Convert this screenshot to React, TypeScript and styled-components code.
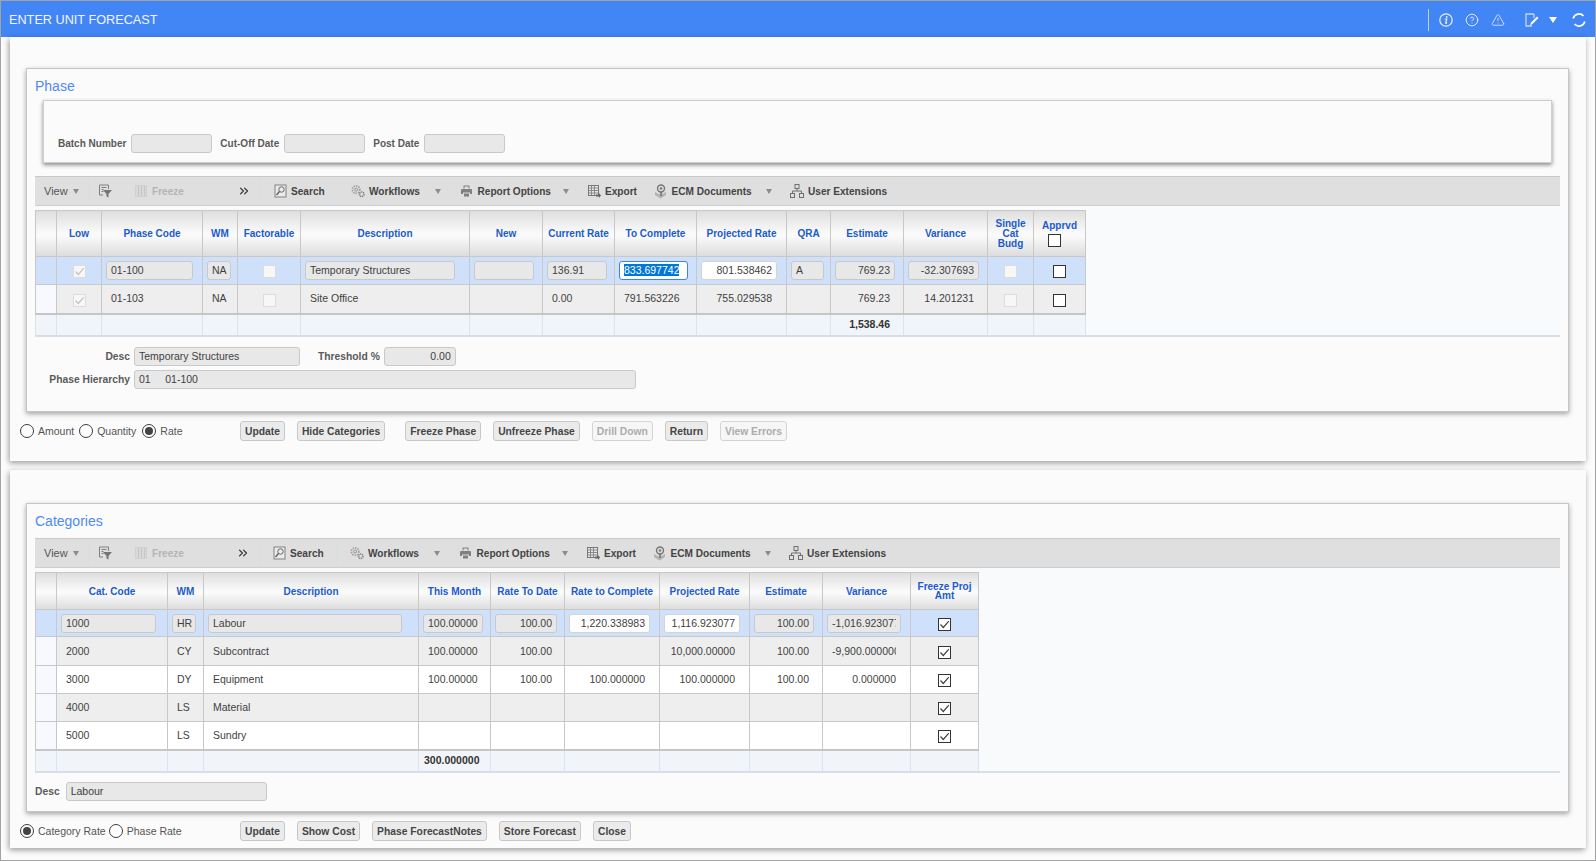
import styled, { createGlobalStyle } from 'styled-components';
import { ChevronsRight, CircleHelp, TriangleAlert } from 'lucide-react';

const GlobalStyle = createGlobalStyle`
  html, body { margin: 0; padding: 0; background: #fbfbfb; }
  body { font-family: "Liberation Sans", Arial, sans-serif; }
  * { box-sizing: border-box; }
`;

const AppWindow = styled.div`
  width: 1596px;
  height: 861px;
  overflow: hidden;
  border: 1px solid #a3a3a3;
  background: #fcfcfc;
`;

const Header = styled.header`
  display: flex;
  align-items: center;
  height: 36px;
  padding: 1px 9px 0 8px;
  background: #4285f4;
`;

const HeaderTitle = styled.div`
  flex: 1;
  font-size: 12.7px;
  color: #f2f6ff;
`;

const HeaderRule = styled.div`
  width: 1px;
  height: 22px;
  background: #b9d0fa;
`;

const HeaderIcon = styled.span<{ $ml: number }>`
  display: flex;
  margin-left: ${({ $ml }) => $ml}px;
  color: #e8f0ff;
`;

const HeaderCaret = styled.span`
  margin-left: 10px;
  border-left: 4px solid transparent;
  border-right: 4px solid transparent;
  border-top: 6px solid #fff;
`;

const Outer = styled.section<{ $h: number }>`
  display: flow-root;
  height: ${({ $h }) => $h}px;
  margin: 0 9px 9px 9px;
  background: #fbfbfb;
  box-shadow: -1px 2px 6px rgba(0, 0, 0, 0.4);
`;

const Inner = styled.div<{ $top: number; $h: number }>`
  height: ${({ $h }) => $h}px;
  margin: ${({ $top }) => $top}px 17px 0 16px;
  padding: 0 8px;
  border: 1px solid #c6c6c6;
  background: #fbfbfb;
  box-shadow: 0 2px 5px rgba(0, 0, 0, 0.35);
`;

const PanelTitle = styled.div<{ $h: number }>`
  height: ${({ $h }) => $h}px;
  padding-top: 9px;
  font-size: 14px;
  line-height: 16px;
  color: #4f8af5;
`;

const FilterBox = styled.div`
  display: flex;
  align-items: flex-end;
  gap: 8px;
  height: 63px;
  margin: 0 8px 13px;
  padding: 0 0 9px 14px;
  border: 1px solid #cfcfcf;
  background: #fbfbfb;
  box-shadow: 0 2px 4px rgba(0, 0, 0, 0.45);
`;

const LabelGroup = styled.div`
  display: flex;
  align-items: center;
  gap: 5px;
`;

const FieldLabel = styled.label<{ $w?: number }>`
  flex: none;
  width: ${({ $w }) => ($w ? `${$w}px` : 'auto')};
  text-align: right;
  font-size: 10.3px;
  font-weight: 700;
  color: #5a5a5a;
  white-space: nowrap;
`;

const FilterLabel = styled(FieldLabel)`
  font-size: 10px;
`;

const Field = styled.div<{
  $w: number;
  $kind: 'ro' | 'edit' | 'focus' | 'plain';
  $right?: boolean;
  $clip?: boolean;
}>`
  width: ${({ $w }) => $w}px;
  height: 19px;
  padding: 0 4px;
  border: 1px solid
    ${({ $kind }) =>
      $kind === 'focus' ? '#3a84ee' : $kind === 'plain' ? 'transparent' : $kind === 'edit' ? '#d4d4d4' : '#c9c9c9'};
  border-radius: 3px;
  background: ${({ $kind }) =>
    $kind === 'ro' ? '#e8e8e8' : $kind === 'plain' ? 'transparent' : '#ffffff'};
  font-size: 10.5px;
  line-height: 17px;
  color: #3f3f3f;
  text-align: ${({ $right }) => ($right ? 'right' : 'left')};
  white-space: pre;
  overflow: ${({ $clip }) => ($clip ? 'clip' : 'visible')};
  overflow-clip-margin: content-box;
`;

const Selected = styled.span`
  background: #0078d7;
  color: #fff;
`;

const Toolbar = styled.div`
  display: flex;
  align-items: center;
  height: 30px;
  border-top: 1px solid #c9c9c9;
  border-bottom: 1px solid #cecece;
  background: #dfdfdf;
`;

const ToolSection = styled.div<{ $w: number; $first?: boolean }>`
  display: flex;
  align-items: center;
  flex: none;
  width: ${({ $w }) => $w}px;
  height: 100%;
  padding-left: 9px;
  border-left: ${({ $first }) => ($first ? 'none' : '1px solid #d6dee6')};
`;

const ViewLabel = styled.span`
  font-size: 11px;
  color: #555;
`;

const Caret = styled.span<{ $auto?: boolean }>`
  flex: none;
  margin-left: ${({ $auto }) => ($auto ? 'auto' : '5px')};
  border-left: 3.5px solid transparent;
  border-right: 3.5px solid transparent;
  border-top: 5px solid #8c8c8c;
`;

const ToolItem = styled.div<{ $w?: number; $ml?: number; $trail?: boolean }>`
  display: flex;
  align-items: center;
  gap: 4px;
  flex: none;
  width: ${({ $w }) => ($w ? `${$w}px` : 'auto')};
  margin-left: ${({ $ml }) => $ml ?? 0}px;
  padding-right: ${({ $trail }) => ($trail ? 18 : 0)}px;
`;

const ToolIcon = styled.span`
  display: flex;
  flex: none;
  justify-content: center;
  width: 14px;
  color: #6f6f6f;
`;

const ToolText = styled.span<{ $off?: boolean }>`
  font-size: 10.1px;
  font-weight: 700;
  color: ${({ $off }) => ($off ? '#b4b4b4' : '#444')};
  white-space: nowrap;
`;

const More = styled.span`
  display: flex;
  margin-left: auto;
  margin-right: 9px;
  color: #333;
`;

const TableWrap = styled.div`
  padding-top: 4px;
  border-bottom: 2px solid #d5dfe8;
  background: #f8fafc;
`;

const Grid = styled.table<{ $w: number }>`
  width: ${({ $w }) => $w}px;
  border-collapse: collapse;
  table-layout: fixed;
`;

const Col = styled.col<{ $w: number }>`
  width: ${({ $w }) => $w}px;
`;

const Row = styled.tr<{ $h: number }>`
  height: ${({ $h }) => $h}px;
`;

const HeadCell = styled.th<{ $lh: number }>`
  padding: 0 1px;
  border: 1px solid #c8c8c8;
  background: linear-gradient(#dfdfdf 0%, #fafafa 48%, #fafafa 55%, #dcdcdc 100%);
  font-size: 10px;
  font-weight: 700;
  line-height: ${({ $lh }) => $lh}px;
  color: #1a5bd0;
  text-align: center;
`;

const BodyCell = styled.td<{ $bg: string }>`
  padding: 0 0 0 4px;
  border: 1px solid #c8c8c8;
  background: ${({ $bg }) => $bg};
  text-align: left;
`;

const CheckCell = styled(BodyCell)`
  padding: 0;
  text-align: center;
`;

const TotalCell = styled.td`
  padding: 0 0 0 4px;
  border: 1px solid #dbe4ec;
  border-top: 2px solid #c6c6c6;
  border-bottom: none;
  background: #f1f4f8;
`;

const TotalField = styled(Field)`
  padding-left: 0;
  font-weight: 700;
  color: #333;
`;

const Check = styled.span<{ $off?: boolean; $head?: boolean }>`
  display: inline-flex;
  align-items: center;
  justify-content: center;
  width: 13px;
  height: 13px;
  margin-top: ${({ $head }) => ($head ? 3 : 1)}px;
  margin-right: ${({ $head }) => ($head ? 10 : 0)}px;
  vertical-align: middle;
  border: 1px solid ${({ $off }) => ($off ? '#dcdcdc' : '#333')};
  background: ${({ $off }) => ($off ? '#f7f7f7' : '#fff')};
`;

const Details = styled.div<{ $top: number }>`
  display: flex;
  flex-direction: column;
  gap: 4.5px;
  margin-top: ${({ $top }) => $top}px;
`;

const DetailRow = styled.div<{ $gap: number }>`
  display: flex;
  align-items: center;
  gap: ${({ $gap }) => $gap}px;
`;

const ThresholdLabel = styled(FieldLabel)`
  margin-left: 14px;
`;

const ActionBar = styled.div`
  display: flex;
  align-items: center;
  height: 20px;
  margin-top: 9px;
  padding-left: 10px;
`;

const RadioGroup = styled.div`
  display: flex;
  align-items: center;
  flex: none;
  width: 220px;
`;

const Radio = styled.span<{ $on?: boolean }>`
  display: flex;
  align-items: center;
  justify-content: center;
  flex: none;
  width: 14px;
  height: 14px;
  border: 1px solid #3c3c3c;
  border-radius: 50%;
  background: #fff;

  &::after {
    content: '';
    display: ${({ $on }) => ($on ? 'block' : 'none')};
    width: 8px;
    height: 8px;
    border-radius: 50%;
    background: #444;
  }
`;

const RadioText = styled.span<{ $mr?: number }>`
  margin: 0 ${({ $mr }) => $mr ?? 4}px 0 4px;
  font-size: 10.5px;
  color: #555;
  white-space: nowrap;
`;

const Buttons = styled.div`
  display: flex;
  gap: 12px;
`;

const Btn = styled.button<{ $off?: boolean; $ml?: number }>`
  height: 20px;
  margin-left: ${({ $ml }) => $ml ?? 0}px;
  padding: 0 4px;
  border: 1px solid ${({ $off }) => ($off ? '#d4d4d4' : '#c8c8c8')};
  border-radius: 3px;
  background: ${({ $off }) => ($off ? '#f6f6f6' : '#ebebeb')};
  font-family: inherit;
  font-size: 10.3px;
  font-weight: 700;
  color: ${({ $off }) => ($off ? '#acacac' : '#454545')};
  white-space: nowrap;
`;

const FilterIcon = () => (
  <svg width="14" height="14" viewBox="0 0 14 14" fill="none">
    <path d="M1.5 1h9v4M1.5 1v10H5M3.5 3.5h5M3.5 5.5h2M3.5 7.5h2" stroke="#808080" />
    <path d="M5 6h9l-3.5 4v3.5l-2-1V10z" fill="#757575" />
  </svg>
);

const FreezeIcon = () => (
  <svg width="12" height="12" viewBox="0 0 12 12" fill="#d3d3d3">
    <rect x="0.5" y="0.5" width="11" height="11" fill="#d9d9d9" stroke="#d0d0d0" />
    <path d="M3 1h1v10H3zM6 1h1v10H6zM9 1h1v10H9z" fill="#c6c6c6" />
  </svg>
);

const SearchIcon = () => (
  <svg width="13" height="14" viewBox="0 0 13 14" fill="none">
    <rect x="1" y="1" width="11" height="12" fill="#eaeaea" stroke="#828282" />
    <circle cx="7.5" cy="5.5" r="2.7" stroke="#666" />
    <path d="M5.5 7.5 2.5 11" stroke="#666" strokeWidth="1.5" />
  </svg>
);

const GearsIcon = () => (
  <svg width="15" height="14" viewBox="0 0 15 14" fill="none">
    <circle cx="5.5" cy="5.5" r="4" stroke="#a2a2a2" strokeWidth="1.8" strokeDasharray="1.6 1" />
    <circle cx="5.5" cy="5.5" r="1.6" stroke="#8e8e8e" />
    <circle cx="11.5" cy="10.5" r="2.4" stroke="#7c7c7c" strokeWidth="1.6" strokeDasharray="1.2 .7" />
  </svg>
);

const PrintIcon = () => (
  <svg width="11" height="12" viewBox="0 0 11 12" fill="#808080">
    <path d="M2.5 0.5h6v3h-1v-2h-4v2h-1z" />
    <path d="M1 4h9a1 1 0 0 1 1 1v4H9V7.5H2V9H0V5a1 1 0 0 1 1-1z" />
    <rect x="3" y="8.5" width="5" height="3" />
  </svg>
);

const ExportIcon = () => (
  <svg width="13" height="13" viewBox="0 0 13 13" fill="none">
    <rect x="0.5" y="0.5" width="10" height="10" fill="#e6e6e6" stroke="#777" />
    <path d="M0.5 3h10M3.5 1v9M6.5 1v9M1 5.5h9M1 8h9" stroke="#8a8a8a" />
    <path d="M8 9.5h3V8l2 2.5-2 2.5v-1.5H8z" fill="#666" />
  </svg>
);

const EcmIcon = () => (
  <svg width="13" height="15" viewBox="0 0 13 15" fill="none">
    <path d="M1 8 6.5 11 12 8v3l-5.500 3.500L1 11z" fill="#b2b2b2" />
    <circle cx="7" cy="4.500" r="3.500" fill="#dcdcdc" stroke="#767676" strokeWidth="1.400" />
    <path d="M7 8v4" stroke="#6c6c6c" strokeWidth="1.500" />
    <circle cx="7" cy="4.500" r="1.200" fill="#777" />
  </svg>
);

const ExtensionsIcon = () => (
  <svg width="14" height="14" viewBox="0 0 14 14" fill="none" stroke="#6f6f6f">
    <rect x="5" y="0.500" width="4" height="4" />
    <rect x="0.500" y="9.500" width="4" height="4" />
    <rect x="9.500" y="9.500" width="4" height="4" />
    <path d="M7 4.500V7M2.500 9.500V7h9v2.500" />
  </svg>
);

const InfoIcon = () => (
  <svg width="14" height="14" viewBox="0 0 14 14" fill="none">
    <circle cx="7" cy="7" r="6.200" stroke="currentColor" strokeWidth="1.200" />
    <circle cx="7.700" cy="3.900" r="0.900" fill="currentColor" />
    <path d="M5.800 6h2l-1.100 3.900c-.1.400.2.500.5.300l.8-.6" stroke="currentColor" strokeWidth="1.200" />
  </svg>
);

const NoteIcon = () => (
  <svg width="14" height="14" viewBox="0 0 14 14" fill="none">
    <path d="M9 1H1v12h6" stroke="#c3d6fb" strokeWidth="1.300" />
    <path d="M9 1v4" stroke="#c3d6fb" strokeWidth="1.300" />
    <path d="M5 12.500l1-3L12 3.500l1.500 1.500-6 6z" fill="#fff" />
  </svg>
);

const RefreshIcon = () => (
  <svg width="14" height="14" viewBox="0 0 14 14" fill="none" stroke="#fff" strokeWidth="1.700">
    <path d="M1.200 5.500A6 6 0 0 1 11.500 3" />
    <path d="M12.800 8.500A6 6 0 0 1 2.500 11" />
  </svg>
);

const TickMark = ({ color }: { color: string }) => (
  <svg width="11" height="11" viewBox="0 0 11 11" fill="none">
    <path d="M1.500 5.500 4.300 8.500 9.800 2.200" stroke={color} strokeWidth="1.200" />
  </svg>
);

type CellSpec =
  | null
  | { kind: 'ro' | 'edit' | 'focus' | 'plain'; text?: string; right?: boolean; clip?: boolean }
  | { kind: 'check'; on?: boolean; off?: boolean };

interface Column {
  title: React.ReactNode;
  w: number;
  field?: number;
}

const ro = (text = '', right = false): CellSpec => ({ kind: 'ro', text, right });
const edit = (text: string): CellSpec => ({ kind: 'edit', text, right: true });
const plain = (text = '', right = false): CellSpec => ({ kind: 'plain', text, right });
const lowTick: CellSpec = { kind: 'check', on: true, off: true };
const blankOff: CellSpec = { kind: 'check', off: true };
const blankOn: CellSpec = { kind: 'check' };
const tick: CellSpec = { kind: 'check', on: true };

const PHASE_COLUMNS: Column[] = [
  { title: '', w: 21 },
  { title: 'Low', w: 45 },
  { title: 'Phase Code', w: 101, field: 87 },
  { title: 'WM', w: 35, field: 24 },
  { title: 'Factorable', w: 63 },
  { title: 'Description', w: 169, field: 150 },
  { title: 'New', w: 73, field: 60 },
  { title: 'Current Rate', w: 72, field: 60 },
  { title: 'To Complete', w: 82, field: 69 },
  { title: 'Projected Rate', w: 90, field: 76 },
  { title: 'QRA', w: 44, field: 33 },
  { title: 'Estimate', w: 73, field: 60 },
  { title: 'Variance', w: 84, field: 71 },
  { title: <>Single<br />Cat<br />Budg</>, w: 46 },
  { title: <>Apprvd<br /><Check $head /></>, w: 52 },
];

const PHASE_ROWS: { h: number; bg: string; cells: CellSpec[] }[] = [
  {
    h: 28,
    bg: '#cfe0fb',
    cells: [
      null, lowTick, ro('01-100'), ro('NA'), blankOff, ro('Temporary Structures'), ro(), ro('136.91'),
      { kind: 'focus', text: '833.697742' }, edit('801.538462'), ro('A'), ro('769.23', true), ro('-32.307693', true),
      blankOff, blankOn,
    ],
  },
  {
    h: 29,
    bg: '#eeeeee',
    cells: [
      null, lowTick, plain('01-103'), plain('NA'), blankOff, plain('Site Office'), null, plain('0.00'),
      plain('791.563226'), plain('755.029538', true), null, plain('769.23', true), plain('14.201231', true),
      blankOff, blankOn,
    ],
  },
];

const CATEGORY_COLUMNS: Column[] = [
  { title: '', w: 21 },
  { title: 'Cat. Code', w: 111, field: 95 },
  { title: 'WM', w: 36, field: 24 },
  { title: 'Description', w: 215, field: 194 },
  { title: 'This Month', w: 72, field: 60 },
  { title: 'Rate To Date', w: 74, field: 62 },
  { title: 'Rate to Complete', w: 95, field: 81 },
  { title: 'Projected Rate', w: 90, field: 76 },
  { title: 'Estimate', w: 73, field: 60 },
  { title: 'Variance', w: 88, field: 74 },
  { title: <>Freeze Proj<br />Amt</>, w: 68 },
];

const CATEGORY_ROWS: { h: number; bg: string; cells: CellSpec[] }[] = [
  {
    h: 27,
    bg: '#cfe0fb',
    cells: [
      null, ro('1000'), ro('HR'), ro('Labour'), ro('100.00000'), ro('100.00', true), edit('1,220.338983'),
      edit('1,116.923077'), ro('100.00', true), { kind: 'ro', text: '-1,016.923077', clip: true }, tick,
    ],
  },
  {
    h: 29,
    bg: '#eeeeee',
    cells: [
      null, plain('2000'), plain('CY'), plain('Subcontract'), plain('100.00000'), plain('100.00', true), null,
      plain('10,000.00000', true), plain('100.00', true), { kind: 'plain', text: '-9,900.000000', clip: true }, tick,
    ],
  },
  {
    h: 28,
    bg: '#ffffff',
    cells: [
      null, plain('3000'), plain('DY'), plain('Equipment'), plain('100.00000'), plain('100.00', true),
      plain('100.000000', true), plain('100.000000', true), plain('100.00', true), plain('0.000000', true), tick,
    ],
  },
  {
    h: 28,
    bg: '#eeeeee',
    cells: [null, plain('4000'), plain('LS'), plain('Material'), null, null, null, null, null, null, tick],
  },
  {
    h: 28,
    bg: '#ffffff',
    cells: [null, plain('5000'), plain('LS'), plain('Sundry'), null, null, null, null, null, null, tick],
  },
];

interface DataGridProps {
  columns: Column[];
  rows: { h: number; bg: string; cells: CellSpec[] }[];
  headHeight: number;
  totalAt: number;
  totalText: string;
}

const DataGrid = ({ columns, rows, headHeight, totalAt, totalText }: DataGridProps) => {
  const gridWidth = columns.reduce((sum, c) => sum + c.w, 0);
  return (
    <TableWrap>
      <Grid $w={gridWidth}>
        <colgroup>
          {columns.map((c, i) => (
            <Col key={i} $w={c.w} />
          ))}
        </colgroup>
        <thead>
          <Row $h={headHeight}>
            {columns.map((c, i) => (
              <HeadCell key={i} $lh={columns.length === 11 ? 9 : 10}>
                {c.title}
              </HeadCell>
            ))}
          </Row>
        </thead>
        <tbody>
          {rows.map((row, r) => (
            <Row key={r} $h={row.h}>
              {row.cells.map((cell, i) => {
                const bg = i === 0 && r > 0 ? '#f8f9fe' : row.bg;
                if (!cell) return <BodyCell key={i} $bg={bg} />;
                if (cell.kind === 'check') {
                  return (
                    <CheckCell key={i} $bg={bg}>
                      <Check $off={cell.off}>
                        {cell.on && <TickMark color={cell.off ? '#c4c4c4' : '#444'} />}
                      </Check>
                    </CheckCell>
                  );
                }
                return (
                  <BodyCell key={i} $bg={bg}>
                    <Field $w={columns[i].field ?? 40} $kind={cell.kind} $right={cell.right} $clip={cell.clip}>
                      {cell.kind === 'focus' ? <Selected>{cell.text}</Selected> : cell.text}
                    </Field>
                  </BodyCell>
                );
              })}
            </Row>
          ))}
          <Row $h={21}>
            {columns.map((c, i) => (
              <TotalCell key={i}>
                {i === totalAt && (
                  <TotalField $w={c.field ?? 40} $kind="plain" $right>
                    {totalText}
                  </TotalField>
                )}
              </TotalCell>
            ))}
          </Row>
        </tbody>
      </Grid>
    </TableWrap>
  );
};

const GridToolbar = ({ filterWidth }: { filterWidth: number }) => (
  <Toolbar>
    <ToolSection $w={53} $first>
      <ViewLabel>View</ViewLabel>
      <Caret />
    </ToolSection>
    <ToolSection $w={filterWidth}>
      <ToolIcon>
        <FilterIcon />
      </ToolIcon>
      <ToolItem $ml={22}>
        <ToolIcon>
          <FreezeIcon />
        </ToolIcon>
        <ToolText $off>Freeze</ToolText>
      </ToolItem>
      <More>
        <ChevronsRight size={14} strokeWidth={2} />
      </More>
    </ToolSection>
    <ToolSection $w={77}>
      <ToolItem $ml={3}>
        <ToolIcon>
          <SearchIcon />
        </ToolIcon>
        <ToolText>Search</ToolText>
      </ToolItem>
    </ToolSection>
    <ToolSection $w={122.5}>
      <ToolItem $ml={4} $w={108} $trail>
        <ToolIcon>
          <GearsIcon />
        </ToolIcon>
        <ToolText>Workflows</ToolText>
        <Caret $auto />
      </ToolItem>
    </ToolSection>
    <ToolItem $w={127.5} $trail>
      <ToolIcon>
        <PrintIcon />
      </ToolIcon>
      <ToolText>Report Options</ToolText>
      <Caret $auto />
    </ToolItem>
    <ToolItem $w={66.5}>
      <ToolIcon>
        <ExportIcon />
      </ToolIcon>
      <ToolText>Export</ToolText>
    </ToolItem>
    <ToolItem $w={136.5} $trail>
      <ToolIcon>
        <EcmIcon />
      </ToolIcon>
      <ToolText>ECM Documents</ToolText>
      <Caret $auto />
    </ToolItem>
    <ToolItem>
      <ToolIcon>
        <ExtensionsIcon />
      </ToolIcon>
      <ToolText>User Extensions</ToolText>
    </ToolItem>
  </Toolbar>
);

export default function App() {
  return (
    <AppWindow>
      <GlobalStyle />
      <Header>
        <HeaderTitle>ENTER UNIT FORECAST</HeaderTitle>
        <HeaderRule />
        <HeaderIcon $ml={10}>
          <InfoIcon />
        </HeaderIcon>
        <HeaderIcon $ml={12}>
          <CircleHelp size={14} strokeWidth={1.6} />
        </HeaderIcon>
        <HeaderIcon $ml={12}>
          <TriangleAlert size={14} strokeWidth={1.4} />
        </HeaderIcon>
        <HeaderIcon $ml={20}>
          <NoteIcon />
        </HeaderIcon>
        <HeaderCaret />
        <HeaderIcon $ml={15}>
          <RefreshIcon />
        </HeaderIcon>
      </Header>

      <Outer $h={424}>
        <Inner $top={31} $h={344}>
          <PanelTitle $h={31}>Phase</PanelTitle>
          <FilterBox>
            <LabelGroup>
              <FilterLabel>Batch Number</FilterLabel>
              <Field $w={81} $kind="ro" />
            </LabelGroup>
            <LabelGroup>
              <FilterLabel>Cut-Off Date</FilterLabel>
              <Field $w={81} $kind="ro" />
            </LabelGroup>
            <LabelGroup>
              <FilterLabel>Post Date</FilterLabel>
              <Field $w={81} $kind="ro" />
            </LabelGroup>
          </FilterBox>
          <GridToolbar filterWidth={172} />
          <DataGrid columns={PHASE_COLUMNS} rows={PHASE_ROWS} headHeight={46} totalAt={11} totalText="1,538.46" />
          <Details $top={10}>
            <DetailRow $gap={4}>
              <FieldLabel $w={95}>Desc</FieldLabel>
              <Field $w={166} $kind="ro">Temporary Structures</Field>
              <ThresholdLabel>Threshold %</ThresholdLabel>
              <Field $w={72} $kind="ro" $right>0.00</Field>
            </DetailRow>
            <DetailRow $gap={4}>
              <FieldLabel $w={95}>Phase Hierarchy</FieldLabel>
              <Field $w={502} $kind="ro">{'01     01-100'}</Field>
            </DetailRow>
          </Details>
        </Inner>
        <ActionBar>
          <RadioGroup>
            <Radio />
            <RadioText $mr={5}>Amount</RadioText>
            <Radio />
            <RadioText $mr={6}>Quantity</RadioText>
            <Radio $on />
            <RadioText>Rate</RadioText>
          </RadioGroup>
          <Buttons>
            <Btn>Update</Btn>
            <Btn>Hide Categories</Btn>
            <Btn $ml={8}>Freeze Phase</Btn>
            <Btn>Unfreeze Phase</Btn>
            <Btn $off>Drill Down</Btn>
            <Btn>Return</Btn>
            <Btn $off>View Errors</Btn>
          </Buttons>
        </ActionBar>
      </Outer>

      <Outer $h={378}>
        <Inner $top={33} $h={309}>
          <PanelTitle $h={34}>Categories</PanelTitle>
          <GridToolbar filterWidth={171} />
          <DataGrid columns={CATEGORY_COLUMNS} rows={CATEGORY_ROWS} headHeight={37} totalAt={4} totalText="300.000000" />
          <Details $top={9}>
            <DetailRow $gap={6}>
              <FieldLabel>Desc</FieldLabel>
              <Field $w={201} $kind="ro">Labour</Field>
            </DetailRow>
          </Details>
        </Inner>
        <ActionBar>
          <RadioGroup>
            <Radio $on />
            <RadioText $mr={3}>Category Rate</RadioText>
            <Radio />
            <RadioText>Phase Rate</RadioText>
          </RadioGroup>
          <Buttons>
            <Btn>Update</Btn>
            <Btn>Show Cost</Btn>
            <Btn>Phase ForecastNotes</Btn>
            <Btn>Store Forecast</Btn>
            <Btn>Close</Btn>
          </Buttons>
        </ActionBar>
      </Outer>
    </AppWindow>
  );
}
